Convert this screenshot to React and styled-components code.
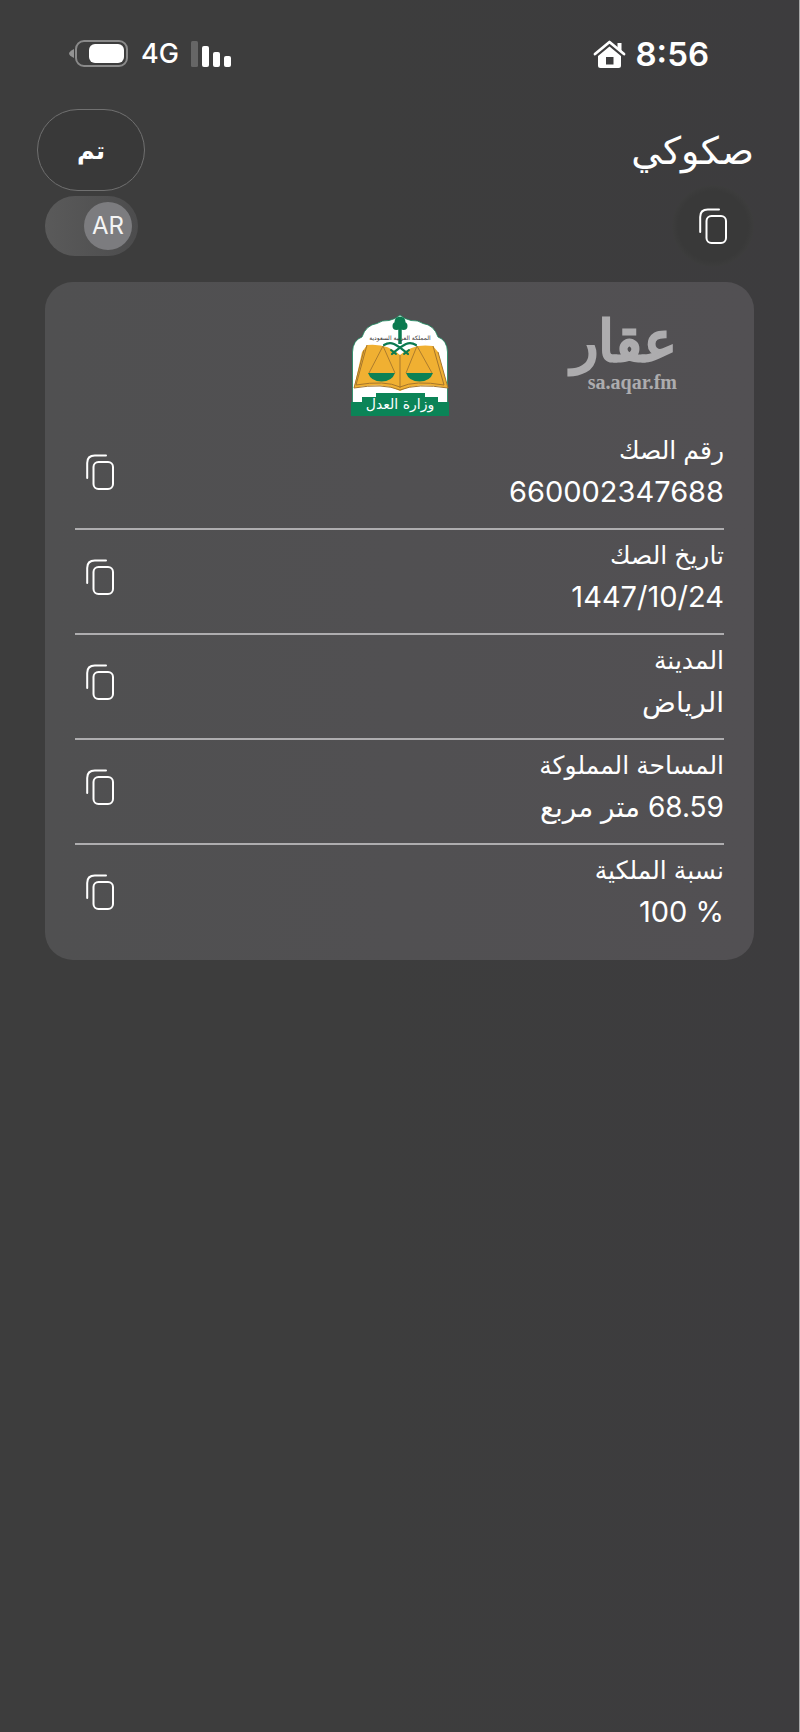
import React, { useState } from "react";
import styled, { createGlobalStyle } from "styled-components";

const GlobalStyle = createGlobalStyle`
  * {
    box-sizing: border-box;
  }

  body {
    margin: 0;
    background: #3d3d3d;
  }

  button {
    border: 0;
    padding: 0;
    background: none;
    color: inherit;
    font: inherit;
    cursor: pointer;
  }
`;

const Page = styled.div`
  min-height: 100vh;
  padding: 36px 45px 48px;
  border-right: 1px solid #a9a9a9;
  background: linear-gradient(to right, #3d3d3d 0%, #3d3d3d 45%, #3d3c3e 100%);
  color: #fff;
  font-family: Inter, "DejaVu Sans", sans-serif;
`;

const StatusBar = styled.div`
  display: flex;
  align-items: center;
  justify-content: space-between;
  height: 36px;
  padding: 0 45px 0 24px;
  direction: ltr;
`;

const StatusGroup = styled.div`
  display: flex;
  align-items: center;
  gap: ${({ $gap }) => $gap};
`;

const Network = styled.span`
  font-size: 27px;
  line-height: 36px;
  font-weight: 500;
`;

const Time = styled.span`
  font-size: 33px;
  line-height: 36px;
  font-weight: 600;
`;

const Header = styled.header`
  display: flex;
  align-items: flex-start;
  justify-content: space-between;
  height: 82px;
  margin-top: 37px;
`;

const Title = styled.h1`
  margin: 0;
  font-size: 38px;
  line-height: 82px;
  font-weight: 400;
`;

const DoneButton = styled.button`
  && {
    width: 108px;
    height: 82px;
    margin-left: -8px;
    border: 1px solid #707070;
    border-radius: 41px;
    background: #393939;
    font-size: 24px;
    font-weight: 700;
  }
`;

const Tools = styled.div`
  display: flex;
  align-items: center;
  justify-content: space-between;
  height: 70px;
`;

const RoundButton = styled.button`
  && {
    display: grid;
    place-items: center;
    width: 82px;
    height: 82px;
    border-radius: 50%;
    background: radial-gradient(closest-side, #393939 85%, #3d3d3d);
  }
`;

const LangToggle = styled.button`
  && {
    display: flex;
    align-items: center;
    justify-content: ${({ $arabic }) => ($arabic ? "flex-start" : "flex-end")};
    width: 93px;
    height: 60px;
    padding: 0 6px;
    border-radius: 30px;
    background: linear-gradient(to right, #5a5a5a, #4c4c4d);
  }
`;

const Knob = styled.span`
  display: grid;
  place-items: center;
  width: 48px;
  height: 48px;
  border-radius: 50%;
  background: #7c7c7f;
  color: #f4f4f4;
  font-size: 24px;
  line-height: 24px;
`;

const Card = styled.main`
  margin-top: 21px;
  padding: 32px 30px 10px;
  border-radius: 28px;
  background: linear-gradient(to right, #505051, #525053);
`;

const CardTop = styled.div`
  display: grid;
  grid-template-columns: 1fr 98px 1fr;
  align-items: start;
  height: 111px;
`;

const Watermark = styled.div`
  justify-self: start;
  margin-right: 47px;
  color: #adacae;
  text-align: right;
`;

const Brand = styled.div`
  font: 400 56px/56px "DejaVu Sans", sans-serif;
  -webkit-text-stroke: 3px #adacae;
`;

const Site = styled.div`
  direction: ltr;
  font: 700 20px/24px "Liberation Serif", serif;
`;

const Row = styled.div`
  display: flex;
  align-items: center;
  justify-content: space-between;
  height: 105px;
  padding-bottom: 10px;
  border-bottom: 2px solid #aeadaf;

  &:last-child {
    border-bottom-color: transparent;
  }
`;

const Fields = styled.dl`
  margin: 0;
`;

const Label = styled.dt`
  font-size: 25px;
  line-height: 40px;
`;

const Value = styled.dd`
  margin: 0;
  font-size: ${({ $words }) => ($words ? "28px" : "29px")};
  line-height: 44px;
`;

const CopyButton = styled.button`
  && {
    display: grid;
    place-items: center;
    width: 50px;
    height: 56px;
  }
`;

const CopyIcon = () => (
  <svg width="28" height="36" viewBox="0 0 28 36" fill="none" stroke="#fff" strokeWidth="2" strokeLinecap="round">
    <path d="M1.2 24V9Q1.2 1.4 8.8 1.4H20" />
    <rect x="7.5" y="8" width="19.5" height="27" rx="5" />
  </svg>
);

const Battery = () => (
  <svg width="60" height="28" viewBox="0 0 60 28">
    <path d="M5 9v9Q0 15.500 0 13.500t5-4.500z" fill="#929292" />
    <rect x="7" y="1" width="51" height="25" rx="8" fill="none" stroke="#8a8a8a" strokeWidth="2" />
    <rect x="20" y="4" width="35" height="19" rx="6" fill="#fff" />
  </svg>
);

const Signal = () => (
  <svg width="40" height="27" viewBox="0 0 40 27">
    <rect x="0" y="0" width="7" height="26" rx="1.5" fill="#666" />
    <rect x="11" y="5" width="7" height="21" rx="2" fill="#fff" />
    <rect x="22" y="11" width="7" height="15" rx="2" fill="#fff" />
    <rect x="33" y="15" width="7" height="11" rx="2" fill="#fff" />
  </svg>
);

const House = () => (
  <svg width="33" height="29" viewBox="0 0 33 29">
    <path d="M2 14 16.500 2 31 14" fill="none" stroke="#fff" strokeWidth="2.800" strokeLinecap="round" strokeLinejoin="round" />
    <path d="M24.500 3h4v9l-4-3.500z" fill="#fff" />
    <path d="M16.500 6.500 28 16V25.500q0 2.500-2.500 2.500h-18Q5 28 5 25.500V16zM13 17V24.500h7.500V17z" fill="#fff" fillRule="evenodd" />
  </svg>
);

const Emblem = () => (
  <svg width="98" height="102" viewBox="0 0 98 102" role="img" aria-label="وزارة العدل">
    <path d="M1.500 91V38Q2 26 11 23Q15 11 26 9.500Q31 6 38 6.500Q45 5 49 1Q53 5 60 6.500Q67 6 72 9.500Q83 11 87 23Q96 26 96.500 38V91z" fill="#fff" stroke="#1b8a60" strokeWidth="0.800" />
    <path d="M16 31Q36 29 49 41Q62 29 82 32L87 38 97 74Q66 68 49 77Q32 68 3 74L11 38z" fill="#f0b032" />
    <path d="M16 31 5 71M13 36 3 74Q32 69 49 76Q66 69 97 74L87 38M82 32 93 71M5 71Q34 66 49 73Q64 66 93 71M49 41v33" fill="none" stroke="#a5762c" strokeWidth="1" />
    <path d="M32 32 18 59M32 32 44 59M66 32 55 59M66 32 81 59" fill="none" stroke="#a5762c" strokeWidth="0.900" />
    <path d="M17 59h27Q41 67.500 30.500 67.500T17 59zM55 59h27Q79 67.500 68.500 67.500T55 59z" fill="#0c8155" />
    <path d="M49 12v18" stroke="#0c7a50" strokeWidth="3.500" />
    <circle cx="45.500" cy="12" r="4" fill="#0c7a50" />
    <circle cx="52.500" cy="12" r="4" fill="#0c7a50" />
    <circle cx="49" cy="8" r="5.500" fill="#0c7a50" />
    <path d="M33 31Q38 28 43 30Q49 33 57 40M65 31Q60 28 55 30Q49 33 41 40" fill="none" stroke="#0c7a50" strokeWidth="2.200" strokeLinecap="round" />
    <path d="M40 36l5 4M58 36l-5 4" stroke="#0c7a50" strokeWidth="2" strokeLinecap="round" />
    <text x="49" y="26" textAnchor="middle" fontFamily="DejaVu Sans" fontSize="6" fill="#333">المملكة العربية السعودية</text>
    <path d="M0 88h11v-5h14v-4h49v4h13v5h11v14H0z" fill="#0b8457" />
    <text x="49" y="95" textAnchor="middle" fontFamily="DejaVu Sans" fontSize="14" fill="#fff">وزارة العدل</text>
  </svg>
);

const deed = [
  { label: "رقم الصك", value: "660002347688" },
  { label: "تاريخ الصك", value: "1447/10/24" },
  { label: "المدينة", value: "الرياض", words: true },
  { label: "المساحة المملوكة", value: "68.59 متر مربع", dir: "rtl", words: true },
  { label: "نسبة الملكية", value: "100 %", dir: "ltr" },
];

const App = () => {
  const [arabic, setArabic] = useState(true);

  const handleCopy = (text) => {
    navigator.clipboard?.writeText(text);
  };

  return (
    <Page dir="rtl" lang="ar">
      <GlobalStyle />
      <StatusBar>
        <StatusGroup $gap="12px">
          <Battery />
          <Network>4G</Network>
          <Signal />
        </StatusGroup>
        <StatusGroup $gap="9px">
          <House />
          <Time>8:56</Time>
        </StatusGroup>
      </StatusBar>

      <Header>
        <Title>صكوكي</Title>
        <DoneButton>تم</DoneButton>
      </Header>

      <Tools>
        <RoundButton
          aria-label="نسخ الكل"
          onClick={() => handleCopy(deed.map((d) => `${d.label}: ${d.value}`).join("\n"))}
        >
          <CopyIcon />
        </RoundButton>
        <LangToggle $arabic={arabic} aria-label="اللغة" onClick={() => setArabic(!arabic)}>
          <Knob>{arabic ? "AR" : "EN"}</Knob>
        </LangToggle>
      </Tools>

      <Card>
        <CardTop>
          <Watermark>
            <Brand>عقار</Brand>
            <Site>sa.aqar.fm</Site>
          </Watermark>
          <Emblem />
        </CardTop>
        {deed.map((d) => (
          <Row key={d.label}>
            <Fields>
              <Label>{d.label}</Label>
              <Value $words={d.words}>
                <bdi dir={d.dir}>{d.value}</bdi>
              </Value>
            </Fields>
            <CopyButton aria-label={`نسخ ${d.label}`} onClick={() => handleCopy(d.value)}>
              <CopyIcon />
            </CopyButton>
          </Row>
        ))}
      </Card>
    </Page>
  );
};

export default App;
